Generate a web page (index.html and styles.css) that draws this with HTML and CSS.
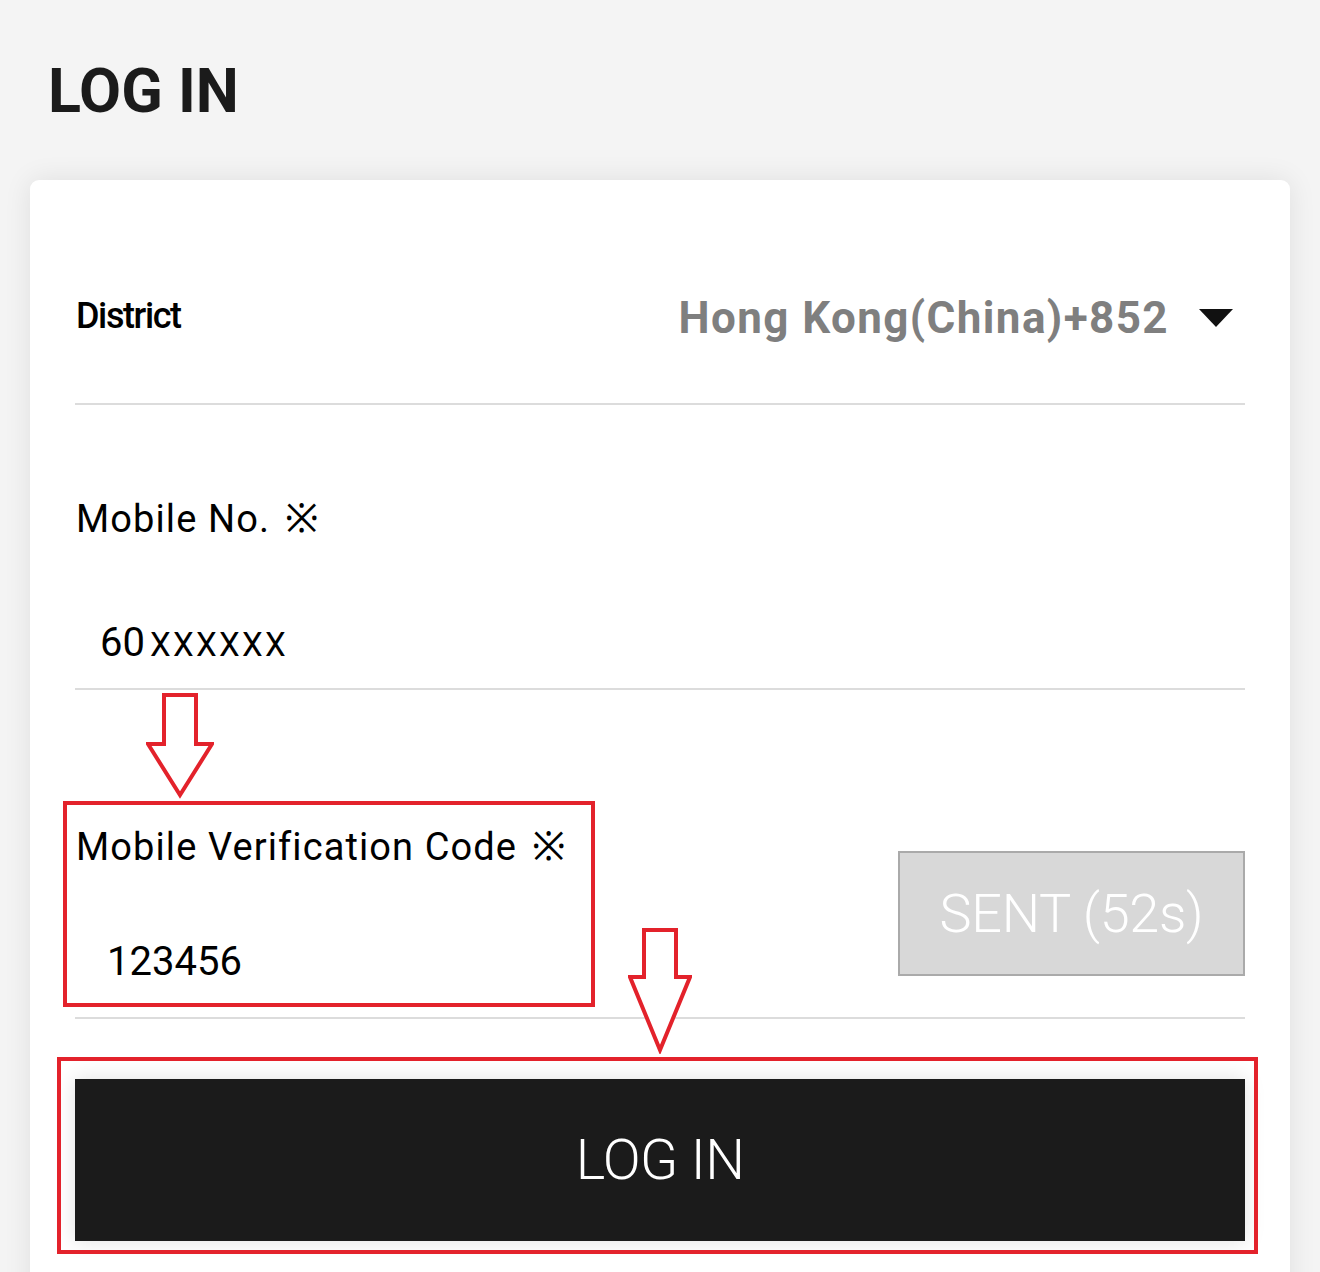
FILE: index.html
```html
<!DOCTYPE html>
<html lang="en">
<head>
<meta charset="utf-8">
<title>Log In</title>
<link rel="stylesheet" href="styles.css">
</head>
<body>
<header class="page-head">
  <h1 class="page-title">LOG IN</h1>
</header>
<main class="card">
  <div class="row district-row">
    <span class="district-label">District</span>
    <span class="district-value">Hong Kong(China)+852<span class="caret"></span></span>
  </div>
  <div class="row field mobile-field">
    <div class="field-label">Mobile No. <span class="req">※</span></div>
    <div class="field-value"><span class="big-digits">60</span><span class="mask">XXXXXX</span></div>
  </div>
  <div class="row field code-row">
    <div class="code-col">
      <div class="field-label">Mobile Verification Code <span class="req">※</span></div>
      <div class="field-value code-value">123456</div>
    </div>
    <button class="sent-btn" type="button">SENT (52s)</button>
  </div>
  <button class="login-btn" type="button">LOG IN</button>

  <div class="mark mark-code"></div>
  <div class="mark mark-login"></div>
  <svg class="arrow arrow-one" width="68" height="106" viewBox="0 0 68 106">
    <polygon points="18,2 50,2 50,51 66,51 34,102 2,51 18,51" fill="#fff" stroke="#e3222b" stroke-width="4" stroke-linejoin="miter"/>
  </svg>
  <svg class="arrow arrow-two" width="64" height="126" viewBox="0 0 64 126">
    <polygon points="16,2 48,2 48,49 62,49 32,122 2,49 16,49" fill="#fff" stroke="#e3222b" stroke-width="4" stroke-linejoin="miter"/>
  </svg>
</main>
</body>
</html>
```
FILE: styles.css
```css
* { box-sizing: border-box; }
html, body {
  margin: 0;
  padding: 0;
  background: #f4f4f4;
  font-family: Roboto, "Liberation Sans", Arial, sans-serif;
  color: #111;
  overflow: hidden;
  height: 1272px;
}
.page-head {
  padding: 55px 0 0 48px;
  height: 180px;
}
.page-title {
  margin: 0;
  font-size: 61px;
  line-height: 72px;
  font-weight: 700;
  color: #1b1b1b;
  letter-spacing: 0;
}
.card {
  position: relative;
  margin: 0 30px;
  background: #fff;
  border-radius: 9px;
  box-shadow: 0 0 28px rgba(0, 0, 0, 0.09);
  padding: 113px 45px 60px 45px;
  min-height: 1200px;
}
.row {
  border-bottom: 2px solid #dcdcdc;
}
.district-row {
  display: flex;
  justify-content: space-between;
  align-items: center;
  padding-bottom: 64px;
  height: 112px;
}
.district-label {
  font-size: 36px;
  line-height: 44px;
  font-weight: 500;
  letter-spacing: -1.4px;
  color: #000;
  padding-left: 1px;
}
.district-value {
  display: flex;
  align-items: center;
  font-size: 44px;
  line-height: 52px;
  font-weight: 700;
  color: #7f7f7f;
  margin-top: 4px;
  letter-spacing: 1.4px;
}
.caret {
  width: 0;
  height: 0;
  border-left: 17px solid transparent;
  border-right: 17px solid transparent;
  border-top: 18px solid #111;
  margin-left: 30px;
  margin-right: 12px;
}
.field-label {
  font-size: 38px;
  line-height: 44px;
  color: #000;
  padding-left: 1px;
  letter-spacing: 1.1px;
}
.req {
  font-size: 40px;
  margin-left: 4px;
  letter-spacing: 0;
}
.field-value {
  font-size: 40px;
  line-height: 48px;
  color: #000;
  padding-left: 25px;
  margin-top: 78px;
}
.mobile-field {
  padding-top: 92px;
  padding-bottom: 19px;
}
.big-digits { font-size: 40px; }
.mask {
  font-size: 33px;
  letter-spacing: 2.3px;
  margin-left: 5px;
}
.code-row {
  display: flex;
  justify-content: space-between;
  align-items: flex-end;
  padding-top: 135px;
  padding-bottom: 31px;
}
.code-value {
  margin-top: 69px;
  padding-left: 32px;
}
.sent-btn {
  width: 347px;
  height: 125px;
  margin-bottom: 10px;
  background: #d8d8d8;
  border: 2px solid #aaaaaa;
  color: #fff;
  font-family: Roboto, "Liberation Sans", Arial, sans-serif;
  font-weight: 300;
  font-size: 54px;
  padding: 0;
  letter-spacing: -0.3px;
}
.login-btn {
  display: block;
  width: 100%;
  height: 162px;
  margin-top: 60px;
  background: #1b1b1b;
  border: none;
  color: #fff;
  font-family: Roboto, "Liberation Sans", Arial, sans-serif;
  font-weight: 300;
  font-size: 56px;
  letter-spacing: -0.6px;
  box-shadow: 0 0 20px rgba(0, 0, 0, 0.12);
}
.mark {
  position: absolute;
  border: 4px solid #e3222b;
}
.mark-code {
  left: 33px;
  top: 621px;
  width: 532px;
  height: 206px;
}
.mark-login {
  left: 27px;
  top: 877px;
  width: 1201px;
  height: 197px;
}
.arrow {
  position: absolute;
  display: block;
}
.arrow-one {
  left: 116px;
  top: 513px;
}
.arrow-two {
  left: 598px;
  top: 748px;
}
```
